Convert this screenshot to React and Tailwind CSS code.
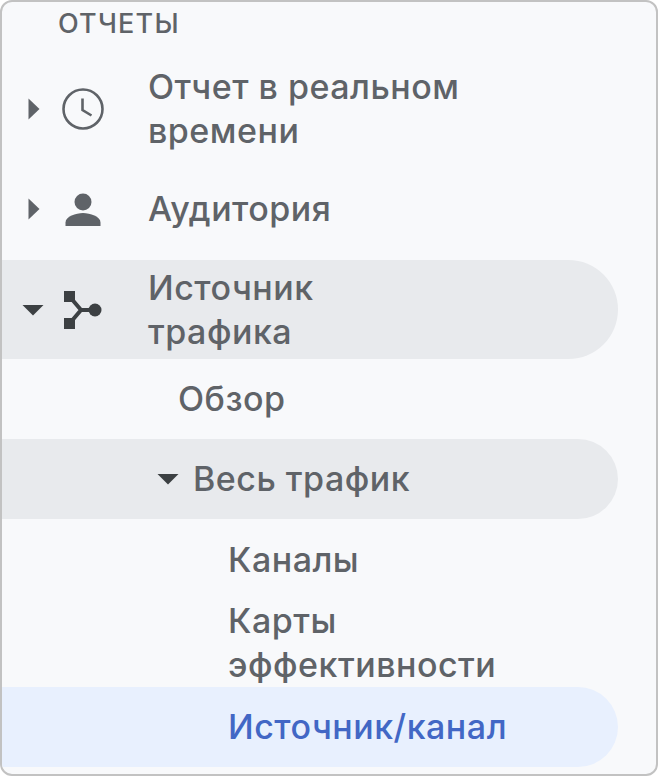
const font = { fontFamily: 'Inter' };

function Caret({ open }) {
    if (open) {
        return (
            <svg width="22" height="12" viewBox="0 0 22 12" className="block">
                <path d="M0.5 1h21L11 11.5z" fill="#3c4043" />
            </svg>
        );
    }
    return (
        <svg width="12" height="22" viewBox="0 0 12 22" className="block">
            <path d="M0.5 0.5v21L11.5 11z" fill="#5f6368" />
        </svg>
    );
}

function ClockIcon() {
    return (
        <svg width="44" height="44" viewBox="0 0 44 44" fill="none" stroke="#5f6368" className="block">
            <circle cx="22" cy="22" r="19.5" strokeWidth="2.6" />
            <path d="M21.5 11.5v11.5l9 5.5" strokeWidth="2.6" />
        </svg>
    );
}

function PersonIcon() {
    return (
        <svg width="44" height="44" viewBox="0 0 44 44" fill="#5f6368" className="block">
            <circle cx="22" cy="15" r="8.5" />
            <path d="M4.5 39v-3.5C4.500 29.500 15 26 22 26S39.500 29.500 39.500 35.500V39z" />
        </svg>
    );
}

function SourceIcon() {
    return (
        <svg width="44" height="44" viewBox="0 0 44 44" fill="#3c4043" className="block">
            <rect x="3" y="3" width="11" height="11" />
            <rect x="3" y="30" width="11" height="11" />
            <circle cx="34" cy="22" r="6.500" />
            <path d="M9 9l11 13L9 35M20 22h14" fill="none" stroke="#3c4043" strokeWidth="4" />
        </svg>
    );
}

function Row({ className = '', children }) {
    return <div className={`flex items-center rounded-r-[50px] mr-[38px] ${className}`}>{children}</div>;
}

export default function App() {
    return (
        <div className="w-[658px] h-[776px] overflow-hidden bg-[#f8f9fb] border-2 border-[#c2c2c2] rounded-[12px] text-[#5f6368] text-[34px] leading-[44px] font-medium tracking-[0.5px]" style={font}>
            <div className="pl-[56px] pt-[5px] h-[44px] text-[27px] leading-[34px] font-medium tracking-[1.2px]">ОТЧЕТЫ</div>

            <Row className="mt-[19px] h-[88px]">
                <div className="w-[34px] ml-[26px]"><Caret /></div>
                <div className="w-[87px] -ml-[1px]"><ClockIcon /></div>
                <div>Отчет в реальном<br />времени</div>
            </Row>

            <Row className="h-[80px] mt-[16px]">
                <div className="w-[34px] ml-[26px]"><Caret /></div>
                <div className="w-[87px] -ml-[1px]"><PersonIcon /></div>
                <div>Аудитория</div>
            </Row>

            <Row className="bg-[#e8eaed] h-[99px] mt-[11px]">
                <div className="w-[40px] ml-[20px]"><Caret open /></div>
                <div className="w-[87px] -ml-[1px]"><SourceIcon /></div>
                <div>Источник<br />трафика</div>
            </Row>

            <Row className="h-[80px] pl-[176px]">Обзор</Row>

            <Row className="bg-[#e8eaed] h-[80px]">
                <div className="w-[36px] ml-[155px]"><Caret open /></div>
                <div>Весь трафик</div>
            </Row>

            <Row className="h-[82px] pl-[226px]">Каналы</Row>

            <Row className="h-[86px] pl-[226px] items-start">
                <div className="-mt-[2px]">Карты<br />эффективности</div>
            </Row>

            <Row className="bg-[#e8f0fe] h-[80px] pl-[226px] text-[#4267c5]">Источник/канал</Row>
        </div>
    );
}
